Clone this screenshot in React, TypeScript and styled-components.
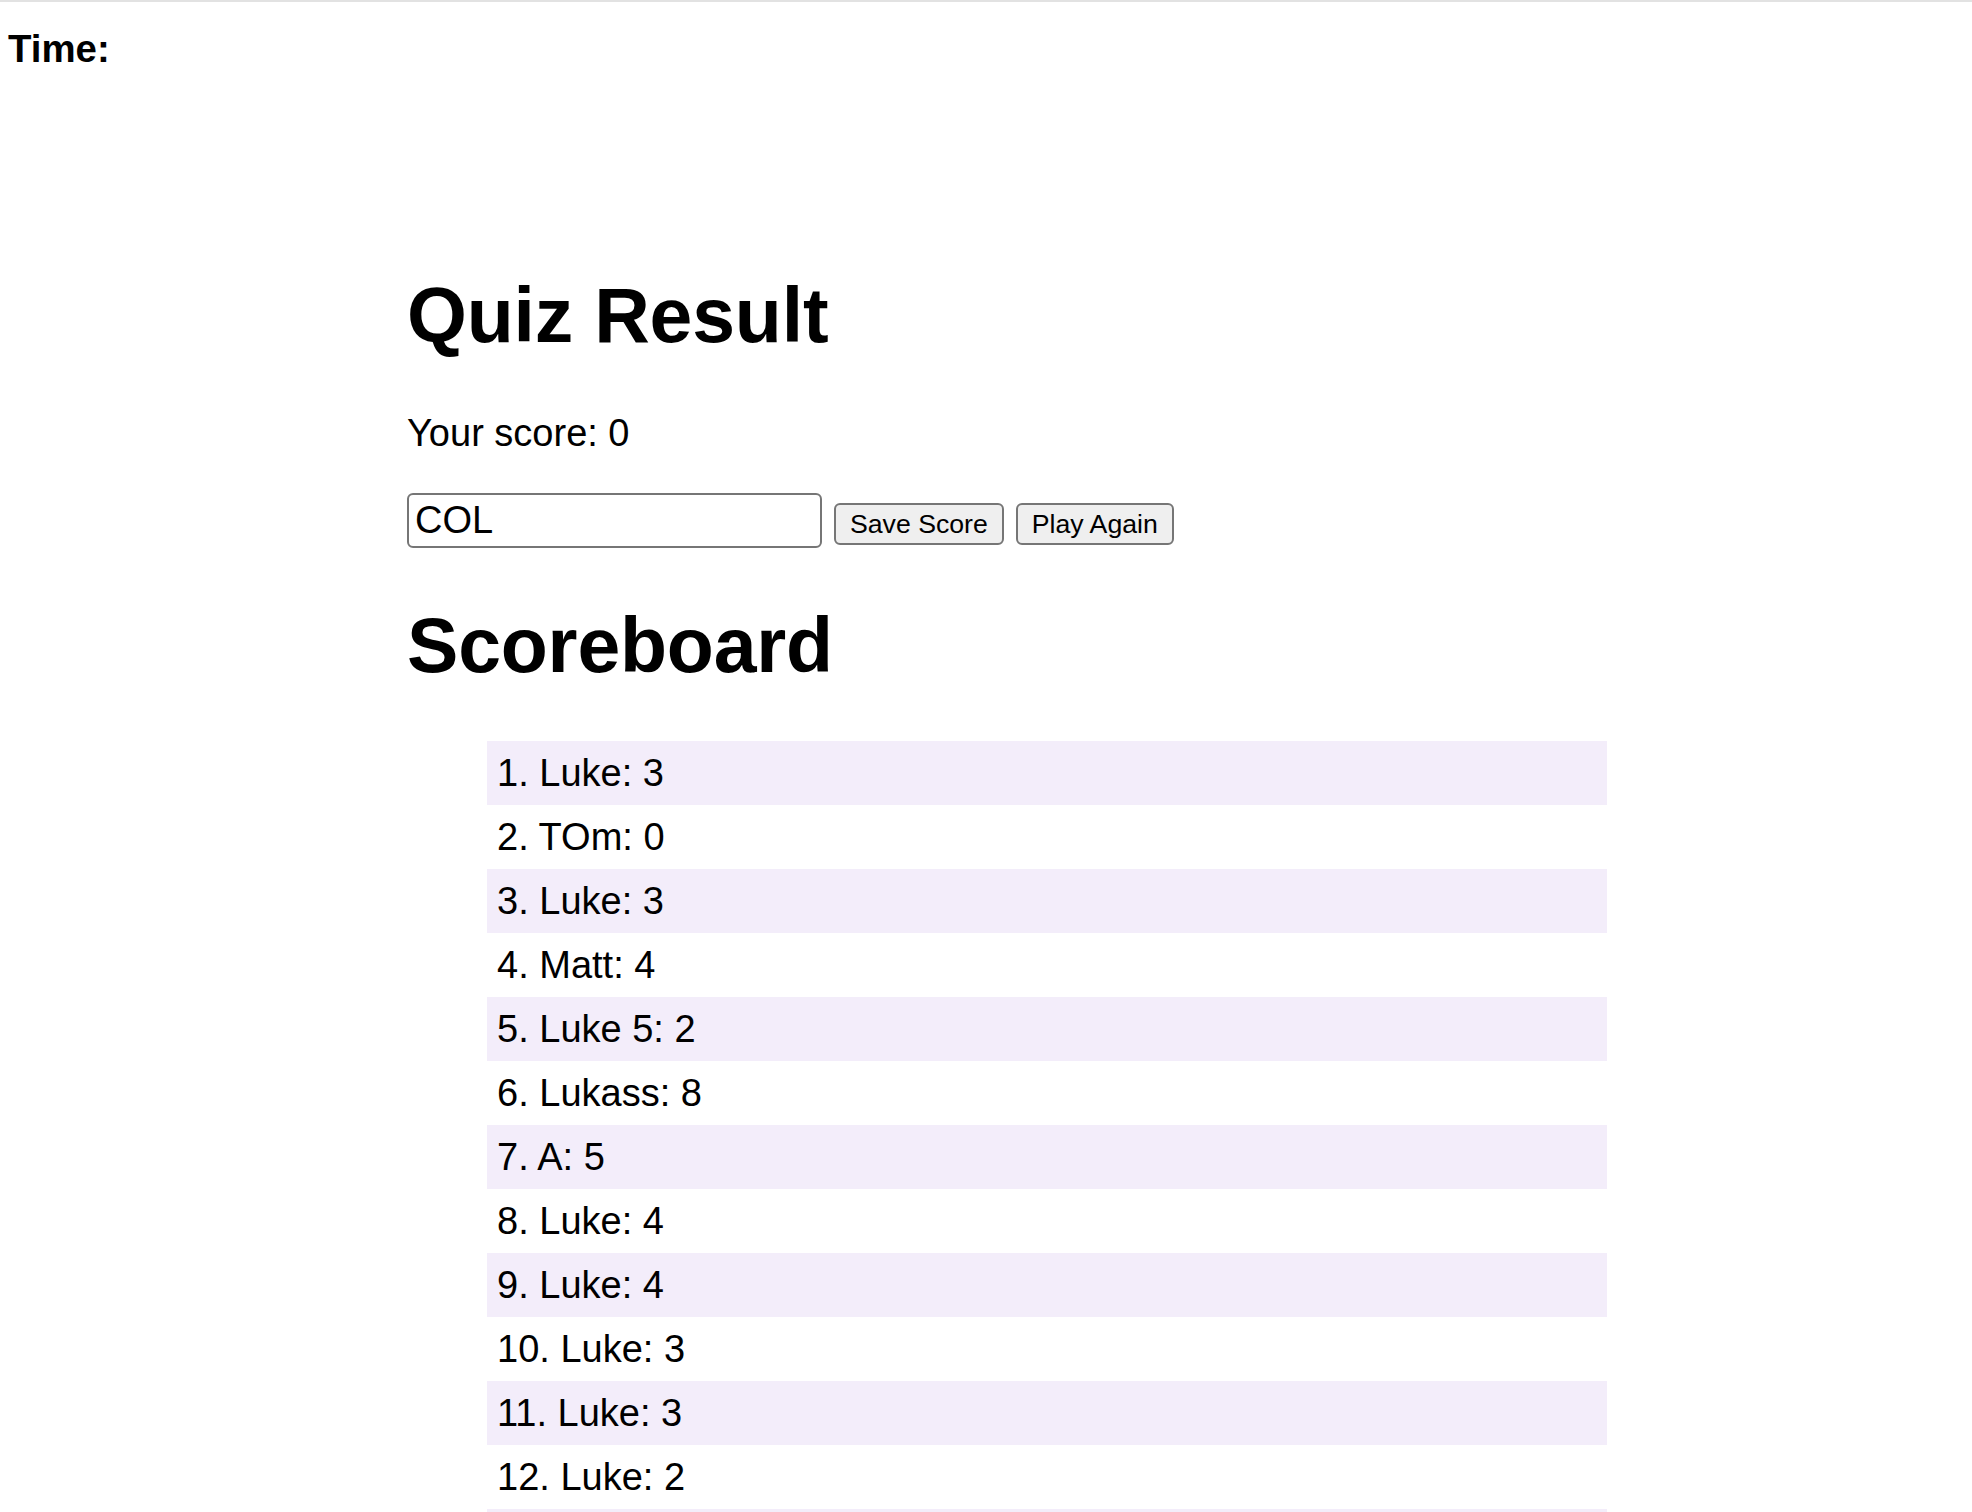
import React from "react";
import styled, { createGlobalStyle } from "styled-components";

const GlobalStyle = createGlobalStyle`
  html, body {
    margin: 0;
    padding: 0;
    background: #ffffff;
  }
  body {
    font-family: "Liberation Sans", Arial, Helvetica, sans-serif;
    color: #000000;
    border-top: 2px solid #e2e2e2;
  }
`;

const Timer = styled.div`
  margin: 25px 0 0 8px;
  font-size: 38.4px;
  line-height: 44px;
  font-weight: 700;
`;

const Main = styled.main`
  width: 1200px;
  margin: 0 0 0 407px;
  display: flex;
  flex-direction: column;
`;

const Heading = styled.h1<{ $top: number }>`
  margin: ${(p) => p.$top}px 0 0 0;
  font-size: 77px;
  line-height: 88px;
  font-weight: 700;
  letter-spacing: -0.2px;
`;

const ScoreText = styled.p`
  margin: 52px 0 0 0;
  font-size: 38px;
  line-height: 44px;
`;

const SaveRow = styled.form`
  margin-top: 38px;
  display: flex;
  align-items: baseline;
  gap: 12px;
`;

const NameInput = styled.input`
  box-sizing: border-box;
  width: 415px;
  height: 55px;
  padding: 4px 6px;
  border: 2px solid #767676;
  border-radius: 6px;
  font-family: "Liberation Sans", Arial, sans-serif;
  font-size: 38px;
  line-height: 43px;
  color: #000;
  background: #fff;
  outline: none;
`;

const Button = styled.button`
  box-sizing: border-box;
  height: 42px;
  padding: 3px 14px;
  border: 2px solid #767676;
  border-radius: 6px;
  background: #efefef;
  font-family: "Liberation Sans", Arial, sans-serif;
  font-size: 26.67px;
  line-height: 30.6px;
  color: #000;
  cursor: pointer;
`;

const List = styled.ul`
  list-style: none;
  margin: 52px 0 0 0;
  padding: 0 0 0 80px;
`;

const Row = styled.li<{ $shaded: boolean }>`
  padding: 10px 10px;
  font-size: 38px;
  line-height: 44px;
  background: ${(p) => (p.$shaded ? "#f3edfa" : "transparent")};
`;

const scores: { name: string; score: number }[] = [
  { name: "Luke", score: 3 },
  { name: "TOm", score: 0 },
  { name: "Luke", score: 3 },
  { name: "Matt", score: 4 },
  { name: "Luke 5", score: 2 },
  { name: "Lukass", score: 8 },
  { name: "A", score: 5 },
  { name: "Luke", score: 4 },
  { name: "Luke", score: 4 },
  { name: "Luke", score: 3 },
  { name: "Luke", score: 3 },
  { name: "Luke", score: 2 },
  { name: "Luke", score: 1 },
];

export default function App() {
  return (
    <>
      <GlobalStyle />
      <Timer>Time:</Timer>
      <Main>
        <Heading $top={200}>Quiz Result</Heading>
        <ScoreText>Your score: 0</ScoreText>
        <SaveRow onSubmit={(e) => e.preventDefault()}>
          <NameInput type="text" defaultValue="COL" />
          <Button type="submit">Save Score</Button>
          <Button type="button">Play Again</Button>
        </SaveRow>
        <Heading $top={53}>Scoreboard</Heading>
        <List>
          {scores.map((s, i) => (
            <Row key={i} $shaded={i % 2 === 0}>
              {i + 1}. {s.name}: {s.score}
            </Row>
          ))}
        </List>
      </Main>
    </>
  );
}
